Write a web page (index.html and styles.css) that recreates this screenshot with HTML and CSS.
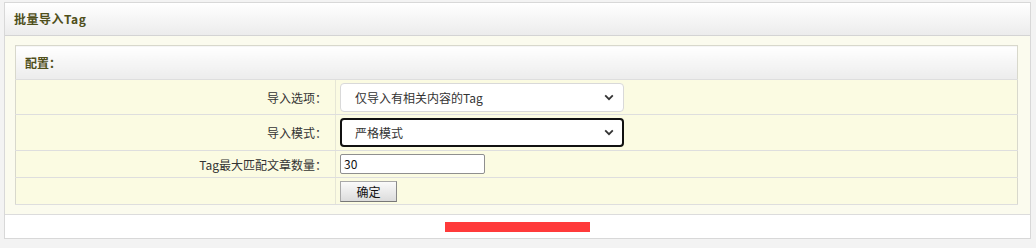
FILE: index.html
```html
<!DOCTYPE html>
<html lang="zh-CN">
<head>
<meta charset="utf-8">
<title>批量导入Tag</title>
<link rel="stylesheet" href="styles.css">
</head>
<body>
<div class="panel">
  <div class="panel-head">批量导入Tag</div>
  <div class="panel-body">
    <table class="form">
      <tr class="form-head"><th colspan="2">配置：</th></tr>
      <tr class="row-a">
        <td class="label">导入选项：</td>
        <td class="field">
          <div class="select">
            <span>仅导入有相关内容的Tag</span>
            <svg class="chev" width="10" height="7" viewBox="0 0 10 7"><path d="M1.2 1.4 L5 5.2 L8.8 1.4" fill="none" stroke="#333" stroke-width="1.8"/></svg>
          </div>
        </td>
      </tr>
      <tr class="row-b">
        <td class="label">导入模式：</td>
        <td class="field">
          <div class="select focused">
            <span>严格模式</span>
            <svg class="chev" width="10" height="7" viewBox="0 0 10 7"><path d="M1.2 1.4 L5 5.2 L8.8 1.4" fill="none" stroke="#333" stroke-width="1.8"/></svg>
          </div>
        </td>
      </tr>
      <tr class="row-c">
        <td class="label">Tag最大匹配文章数量：</td>
        <td class="field"><div class="input">30</div></td>
      </tr>
      <tr class="row-d">
        <td class="label"></td>
        <td class="field"><div class="btn">确定</div></td>
      </tr>
    </table>
  </div>
  <div class="panel-foot"><div class="redact"></div></div>
</div>
</body>
</html>
```
FILE: styles.css
```css
html, body {
  margin: 0;
  padding: 0;
  background: #f3f3f3;
}
body {
  font-family: "Noto Sans CJK SC", "DejaVu Sans", sans-serif;
  font-size: 12px;
  color: #222;
  padding-top: 2px;
}
.panel {
  margin: 0 5px 0 4px;
  border: 1px solid #d8d8d8;
  background: #fbfbee;
}
.panel-head {
  height: 32px;
  line-height: 32px;
  padding-left: 9px;
  font-weight: bold;
  color: #4f4f1a;
  letter-spacing: 0.5px;
  background: linear-gradient(#ffffff, #ececec);
  border-bottom: 1px solid #d4d4d4;
}
.panel-body {
  padding: 9px 12px 9px 10px;
}
.form {
  width: 100%;
  border-collapse: collapse;
  border: 1px solid #d8d8cc;
  background: #fbfbe2;
}
.form-head th {
  height: 33px;
  padding: 0 0 0 9px;
  text-align: left;
  font-weight: bold;
  color: #4f4f1a;
  background: linear-gradient(#ffffff, #ececec);
  border-bottom: 1px solid #dedede;
}
.form td {
  border-bottom: 1px solid #dedede;
  padding: 0;
}
.label {
  width: 311px;
  text-align: right;
  padding-right: 8px !important;
  border-right: 1px solid #e6e6d6;
  color: #333;
}
.field {
  padding-left: 4px !important;
}
.row-a td { height: 34px; }
.row-b td { height: 35px; }
.row-c td { height: 26px; }
.row-d td { height: 26px; }
.select {
  box-sizing: border-box;
  width: 284px;
  height: 29px;
  border: 1px solid #d9d9d9;
  border-radius: 4px;
  background: #fff;
  display: flex;
  align-items: center;
  justify-content: space-between;
  padding: 0 9px 0 14px;
  color: #333;
}
.select.focused {
  border: 2px solid #111;
  height: 29px;
  padding-left: 13px;
  padding-right: 8px;
}
.input {
  box-sizing: border-box;
  width: 145px;
  height: 20px;
  border: 1px solid #8f8f8f;
  border-radius: 2px;
  background: #fff;
  line-height: 18px;
  padding-left: 3px;
  color: #111;
}
.btn {
  box-sizing: border-box;
  width: 57px;
  height: 21px;
  line-height: 19px;
  text-align: center;
  border: 1px solid #a8a8a8;
  border-bottom-color: #777;
  border-right-color: #888;
  background: linear-gradient(#fafafa, #dcdcdc);
  color: #111;
}
.panel-foot {
  border-top: 1px solid #dcdcdc;
  background: #fff;
  height: 24px;
  display: flex;
  justify-content: center;
  padding-top: 7px;
  box-sizing: border-box;
}
.redact {
  width: 145px;
  height: 10px;
  background: #ff3a3a;
}
```
